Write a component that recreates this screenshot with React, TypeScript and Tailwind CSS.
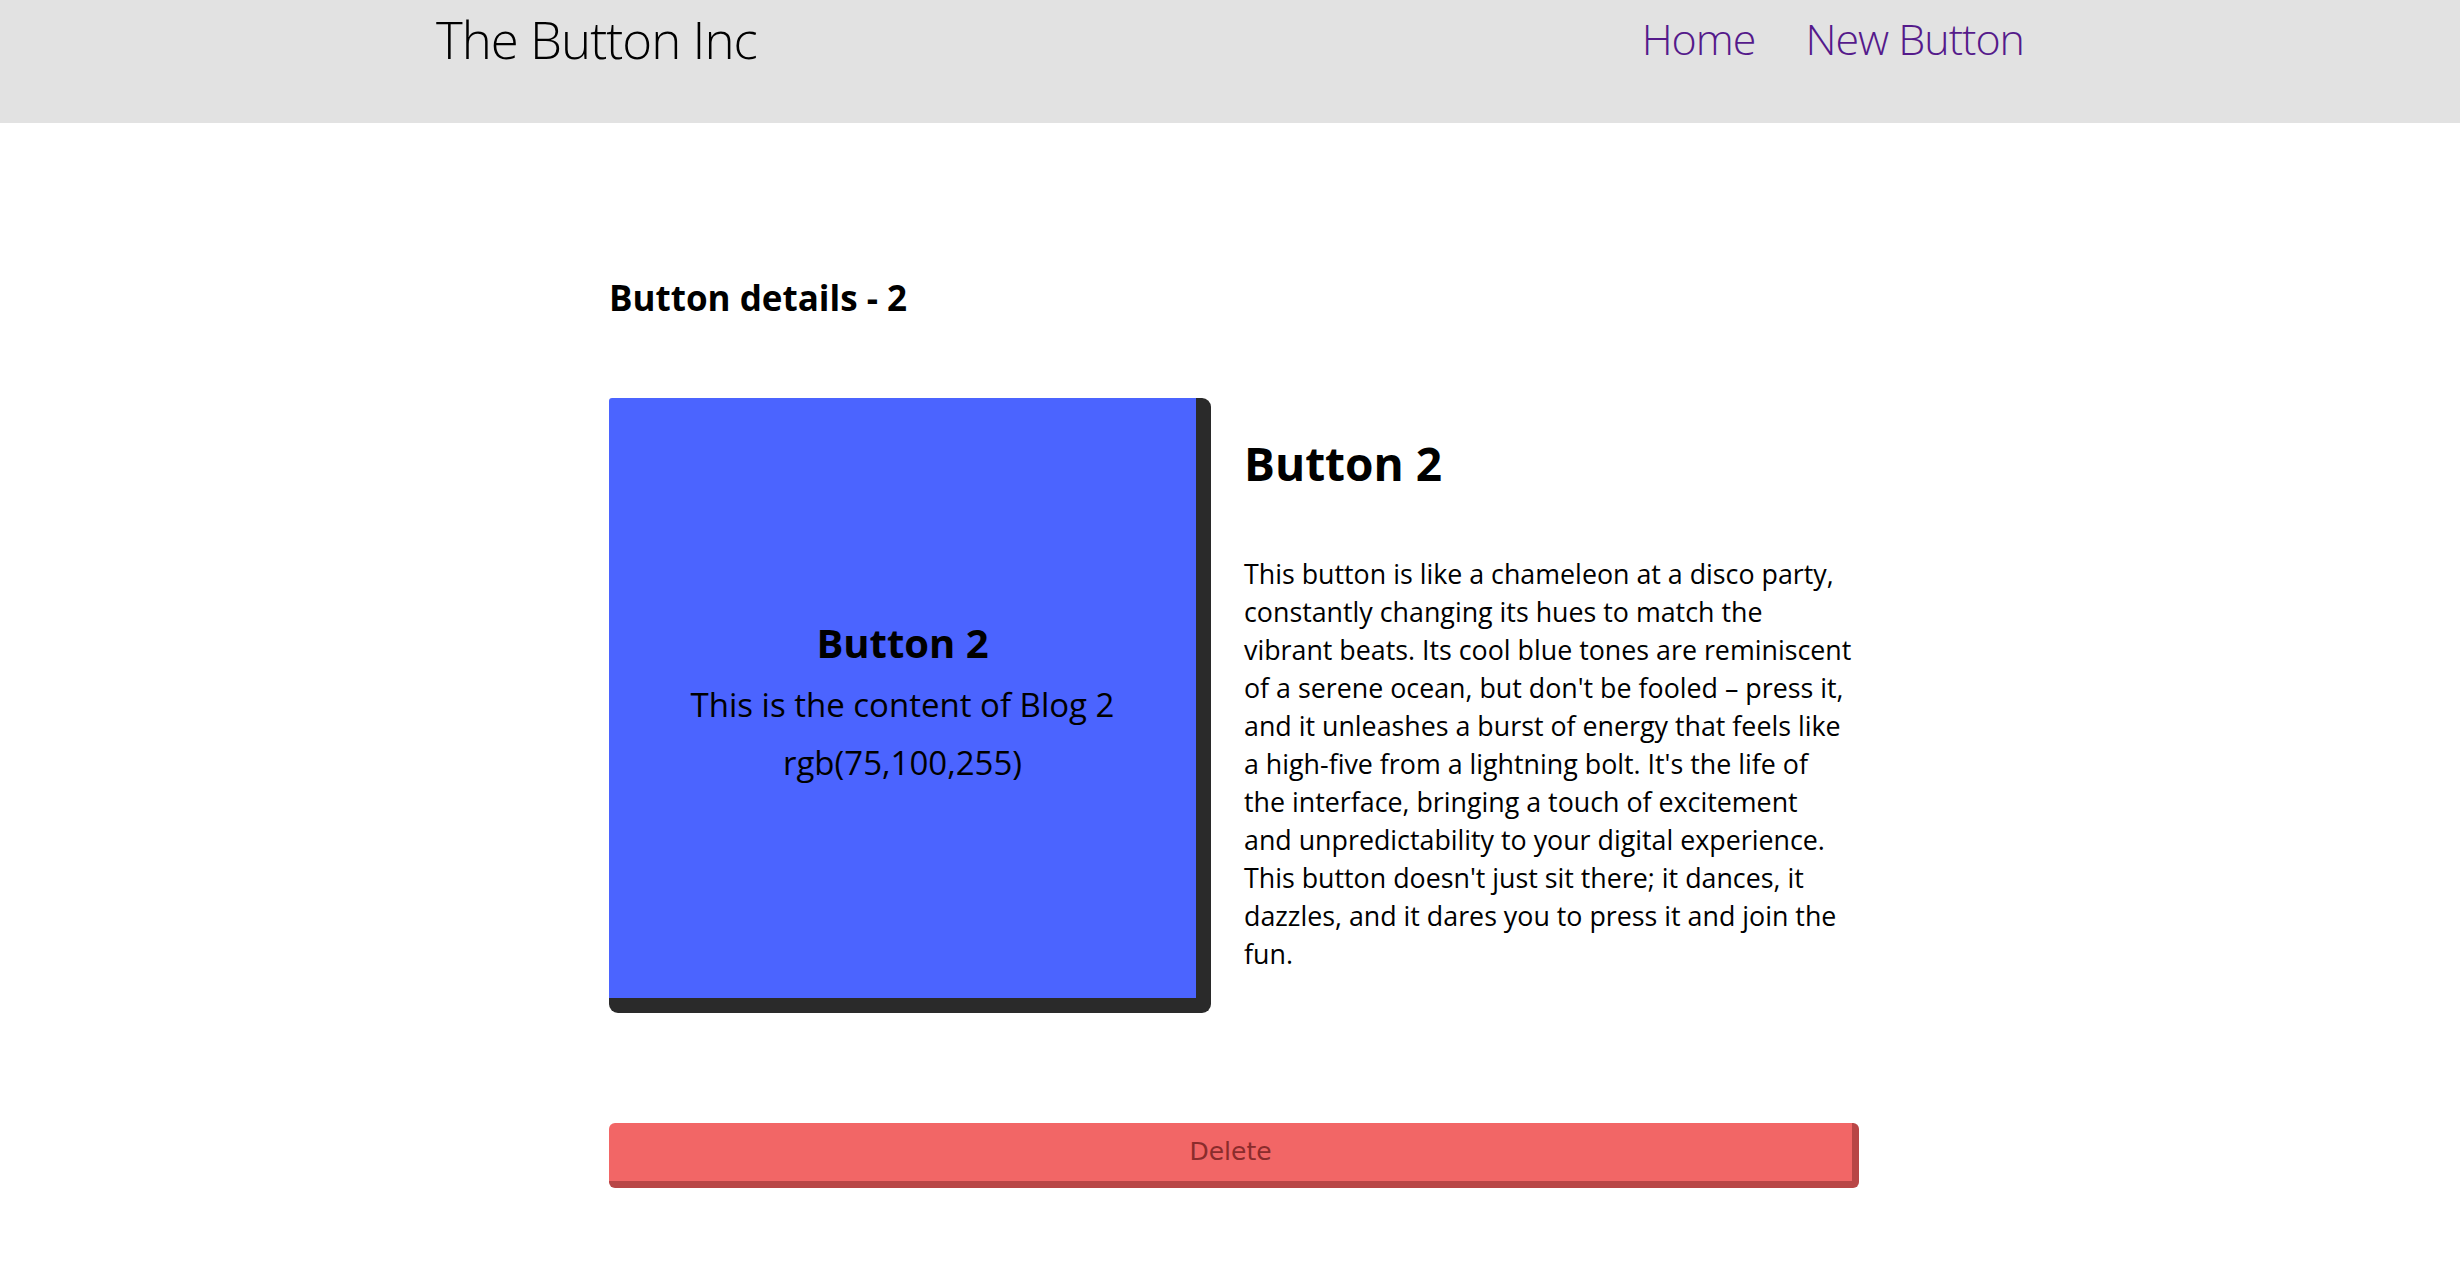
import React from 'react';

const description = [
    'This button is like a chameleon at a disco party,',
    'constantly changing its hues to match the',
    'vibrant beats. Its cool blue tones are reminiscent',
    "of a serene ocean, but don't be fooled – press it,",
    'and it unleashes a burst of energy that feels like',
    "a high-five from a lightning bolt. It's the life of",
    'the interface, bringing a touch of excitement',
    'and unpredictability to your digital experience.',
    "This button doesn't just sit there; it dances, it",
    'dazzles, and it dares you to press it and join the',
    'fun.',
];

export default function App() {
    return (
        <div className="min-h-screen bg-white text-black" style={{ fontFamily: '"Open Sans", "Noto Sans", sans-serif' }}>
            {/* Header */}
            <header className="h-[123px] bg-[#e2e2e2]">
                <div className="w-[1588px] mx-auto flex items-start justify-between leading-[78px]">
                    <span className="text-[51px] font-light tracking-[-1px]">The Button Inc</span>
                    <nav className="flex gap-[50px] text-[43px] font-light tracking-[-1px] text-[#551a8b]">
                        <a href="#">Home</a>
                        <a href="#">New Button</a>
                    </nav>
                </div>
            </header>

            {/* Details */}
            <main className="pl-[8px]">
                <div className="w-[1250px] mx-auto pt-[149px] pb-[100px]">
                    <h2 className="text-[35px] leading-[52px] font-bold">Button details - 2</h2>

                    <div className="flex gap-[33px] mt-[74px]">
                        <div className="w-[602px] h-[615px] shrink-0 bg-[#4b64ff] border-r-[15px] border-b-[15px] border-[#2a2a2a] rounded-tl-[3px] rounded-tr-[9px] rounded-b-[9px] flex flex-col items-center justify-center pt-[9px]">
                            <h3 className="text-[40px] leading-[58px] font-bold mb-[4px]">Button 2</h3>
                            <p className="text-[33px] leading-[58px]">This is the content of Blog 2</p>
                            <p className="text-[33px] leading-[58px]">rgb(75,100,255)</p>
                        </div>

                        <div className="flex-1 min-w-0 pt-[33px]">
                            <h1 className="text-[46px] leading-[64px] font-bold">Button 2</h1>
                            <p className="mt-[60px] text-[26.8px] leading-[38px]">
                                {description.map((line) => (
                                    <span key={line} className="block whitespace-nowrap">{line}</span>
                                ))}
                            </p>
                        </div>
                    </div>

                    <button
                        className="mt-[110px] w-full h-[65px] bg-[#f26666] border-r-[7px] border-b-[7px] border-[#b84646] rounded-[6px] text-[25px] text-[#8a2c2c]"
                        style={{ fontFamily: '"DejaVu Sans", sans-serif' }}
                    >
                        Delete
                    </button>
                </div>
            </main>
        </div>
    );
}
